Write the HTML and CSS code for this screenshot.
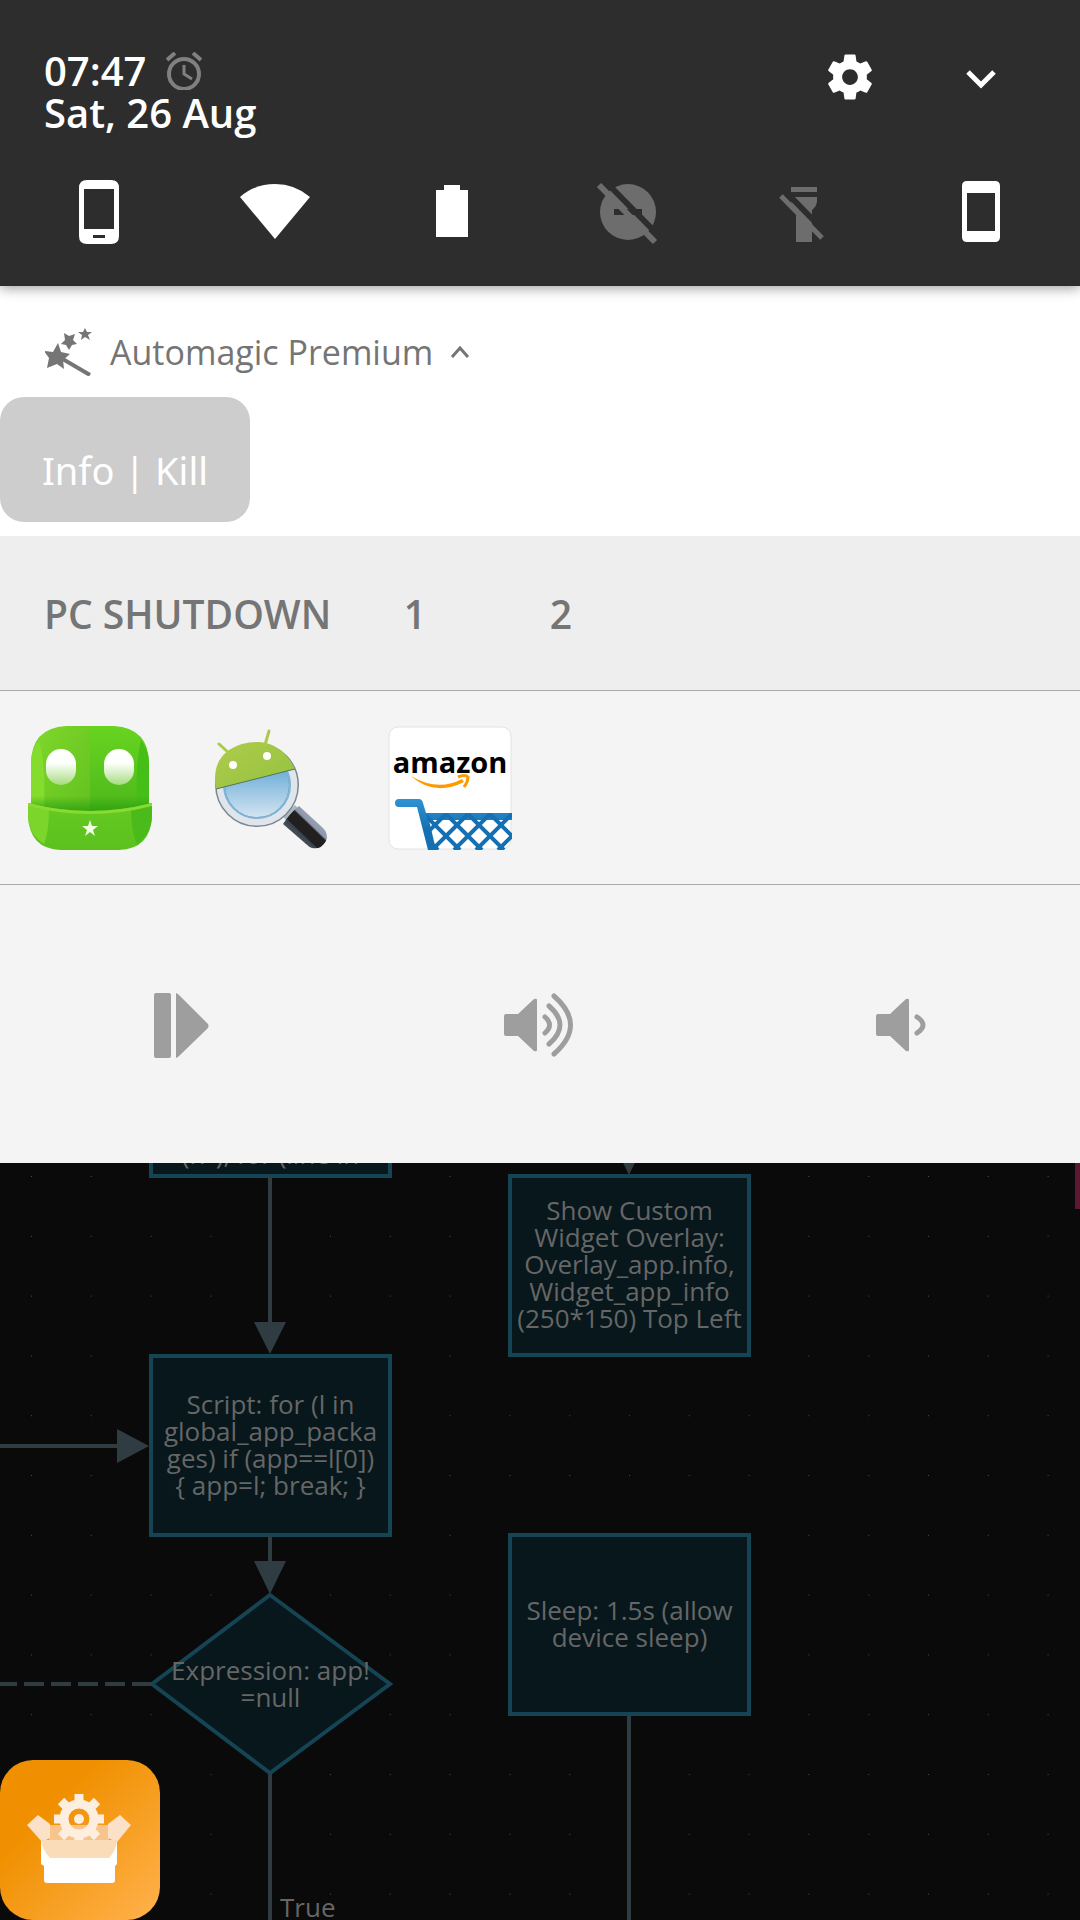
FILE: index.html
```
<!DOCTYPE html>
<html lang="en">
<head>
    <meta charset="UTF-8">
    <meta name="viewport" content="width=device-width,initial-scale=1">
    <title>Notification shade</title>
    <link rel="stylesheet" href="styles.css">
</head>
<body>
<header class="header">
    <div class="status">
        <div class="clock">
            <div class="time">07:47
                <svg class="alarm" viewBox="0 0 36 38" aria-hidden="true">
                    <circle cx="18" cy="22" r="15" fill="none" stroke="#808080" stroke-width="4"/>
                    <path d="M18 13v9l8 5" fill="none" stroke="#808080" stroke-width="3"/>
                    <path d="M1 8L9 1M27 1l8 7" stroke="#808080" stroke-width="4"/>
                </svg>
            </div>
            <div class="date">Sat, 26 Aug</div>
        </div>
        <button class="icon-btn" aria-label="Settings">
            <svg width="54" height="54" viewBox="0 0 24 24" fill="#fff"><path d="M19.43 12.98c.04-.32.07-.64.07-.98s-.03-.66-.07-.98l2.11-1.65c.19-.15.24-.42.12-.64l-2-3.46c-.12-.22-.39-.3-.61-.22l-2.49 1c-.52-.4-1.08-.73-1.69-.98l-.38-2.65C14.46 2.18 14.25 2 14 2h-4c-.25 0-.46.18-.49.42l-.38 2.65c-.61.25-1.17.59-1.69.98l-2.49-1c-.23-.09-.49 0-.61.22l-2 3.46c-.13.22-.07.49.12.64l2.11 1.65c-.04.32-.07.65-.07.98s.03.66.07.98l-2.11 1.65c-.19.15-.24.42-.12.64l2 3.46c.12.22.39.3.61.22l2.49-1c.52.4 1.08.73 1.69.98l.38 2.65c.03.24.24.42.49.42h4c.25 0 .46-.18.49-.42l.38-2.65c.61-.25 1.17-.59 1.69-.98l2.49 1c.23.09.49 0 .61-.22l2-3.46c.12-.22.07-.49-.12-.64l-2.11-1.65zM12 15.5c-1.93 0-3.5-1.57-3.5-3.5s1.57-3.5 3.5-3.5 3.5 1.57 3.5 3.5-1.57 3.5-3.5 3.5z"/></svg>
        </button>
        <button class="icon-btn" aria-label="Expand">
            <svg width="54" height="54" viewBox="0 0 54 54"><path d="M14 22l13 13 13-13" fill="none" stroke="#fff" stroke-width="5"/></svg>
        </button>
    </div>
    <div class="tiles">
        <button class="icon-btn" aria-label="Mobile data">
            <svg width="72" height="72" viewBox="0 0 72 72"><path fill="#fff" fill-rule="evenodd" d="M24 4h24q8 0 8 8v48q0 8-8 8H24q-8 0-8-8V12q0-8 8-8zM21 13v40h30V13zM30 59v3h12v-3z"/></svg>
        </button>
        <button class="icon-btn" aria-label="Wi-Fi">
            <svg width="72" height="72" viewBox="0 0 72 72"><path fill="#fff" d="M36 63L1 21Q16 8 36 8t35 13z"/></svg>
        </button>
        <button class="icon-btn" aria-label="Battery">
            <svg width="72" height="72" viewBox="0 0 72 72"><path fill="#fff" d="M20 14h8V9h16v5h8v47H20z"/></svg>
        </button>
        <button class="icon-btn" aria-label="Do not disturb">
            <svg width="72" height="72" viewBox="0 0 72 72">
                <circle cx="36" cy="36" r="28" fill="#6d6d6d"/>
                <path d="M22 33h28v6H22z" fill="#2d2d2d"/>
                <path d="M12 4l56 57" stroke="#2d2d2d" stroke-width="6"/>
                <path d="M7 9l56 57" stroke="#6d6d6d" stroke-width="6"/>
            </svg>
        </button>
        <button class="icon-btn" aria-label="Flashlight">
            <svg width="72" height="72" viewBox="0 0 72 72">
                <path d="M23 21h26v4q0 5-5 9v32H28V34q-5-5-5-9z" fill="#6d6d6d"/>
                <path d="M16 14l42 43M10 14l10 0 0 12z" stroke="#2d2d2d" stroke-width="6" fill="#2d2d2d"/>
                <path d="M23 11h26v5H23z" fill="#6d6d6d"/>
                <path d="M13 20l41 42" stroke="#6d6d6d" stroke-width="5"/>
            </svg>
        </button>
        <button class="icon-btn" aria-label="Rotation lock">
            <svg width="72" height="72" viewBox="0 0 72 72"><path fill="#fff" fill-rule="evenodd" d="M22 5h28q5 0 5 5v51q0 5-5 5H22q-5 0-5-5V10q0-5 5-5zM22 17v38h28V17z"/></svg>
        </button>
    </div>
</header>

<section class="notification">
    <div class="app-line">
        <svg class="wand" width="48" height="48" viewBox="0 0 48 48" fill="#757575" aria-hidden="true">
            <path d="M13 15l3 9 9 2-7 6 1 9-7-5-10 4 2-10-5-7 9 1z"/>
            <path d="M19 5l5 3 6-2-2 6 4 4-5 1-3 5-3-5-5-1 4-4z"/>
            <path d="M40 0l2 4h5l-4 3 2 5-5-3-4 3 1-5-4-3h5z"/>
            <path d="M16 30l29 17" stroke="#757575" stroke-width="4"/>
        </svg>
        <span class="app-name">Automagic Premium</span>
        <svg width="20" height="14" viewBox="0 0 20 14" aria-hidden="true"><path d="M2 12l8-9 8 9" fill="none" stroke="#757575" stroke-width="3"/></svg>
    </div>
    <button class="info-kill">Info | Kill</button>
</section>

<section class="actions">
    <button class="action action-first">PC SHUTDOWN</button>
    <button class="action">1</button>
    <button class="action">2</button>
</section>

<section class="apps">
    <button class="icon-btn" aria-label="Robot">
        <svg width="124" height="124" viewBox="0 0 124 124">
            <defs>
                <linearGradient id="hatL" x1="0" y1="0" x2="1" y2="1"><stop offset="0" stop-color="#7fd82b"/><stop offset="1" stop-color="#63c01f"/></linearGradient>
                <linearGradient id="hatR" x1="0" y1="0" x2="0" y2="1"><stop offset="0" stop-color="#68d420"/><stop offset="1" stop-color="#4cb61b"/></linearGradient>
                <linearGradient id="brim" x1="0" y1="0" x2="0" y2="1"><stop offset="0" stop-color="#66ca22"/><stop offset="1" stop-color="#5cc01f"/></linearGradient>
                <linearGradient id="eye" x1="0" y1="0" x2="0" y2="1"><stop offset="0" stop-color="#fff"/><stop offset=".4" stop-color="#fdfffb"/><stop offset="1" stop-color="#a5dc80"/></linearGradient>
                <linearGradient id="shade" x1="0" y1="0" x2="0" y2="1"><stop offset="0" stop-color="#2ba010" stop-opacity="0"/><stop offset="1" stop-color="#2ba010"/></linearGradient>
            </defs>
            <path d="M62 0H38Q3 2 3 38v52h59z" fill="url(#hatL)"/>
            <path d="M62 0h24q35 2 35 38v52H62z" fill="url(#hatR)"/>
            <path d="M11 14q-8 10-8 24v45h13Q18 40 11 14z" fill="#84dc2d"/>
            <path d="M113 14q8 10 8 24v45h-12Q107 40 113 14z" fill="#45bf18"/>
            <path d="M3 70h118v18H3z" fill="url(#shade)"/>
            <path d="M0 77q62 16 124 0v12q-1 34-33 35H33Q1 123 0 89z" fill="url(#brim)"/>
            <path d="M0 77l21 5q0 24-5 36Q0 108 0 89z" fill="#7bd52a"/>
            <path d="M124 77l-21 5q0 24 6 36 15-10 15-29z" fill="#4bbb1b"/>
            <path d="M0 77q62 16 124 0v3q-62 16-124 0z" fill="#8adb30"/>
            <rect x="18" y="23" width="30" height="36" rx="15" fill="url(#eye)"/>
            <rect x="76" y="23" width="30" height="36" rx="15" fill="url(#eye)"/>
            <path d="M62 94l2 6h6l-5 4 2 6-5-4-5 4 2-6-5-4h6z" fill="#f1ffe4"/>
        </svg>
    </button>
    <button class="icon-btn" aria-label="App search">
        <svg width="124" height="124" viewBox="0 0 124 124">
            <defs>
                <linearGradient id="lens" x1="0" y1="0" x2="0" y2="1"><stop offset=".3" stop-color="#6fafd9"/><stop offset="1" stop-color="#dde9f3"/></linearGradient>
                <linearGradient id="grip" x1="0" y1="1" x2="1" y2="0"><stop offset=".2" stop-color="#55616c"/><stop offset=".38" stop-color="#3a434c"/><stop offset=".4" stop-color="#221f20"/><stop offset=".57" stop-color="#221f20"/><stop offset=".6" stop-color="#8f97ab"/><stop offset=".8" stop-color="#9fa8bc"/></linearGradient>
                <linearGradient id="head" x1="0" y1="0" x2="1" y2="1"><stop offset="0" stop-color="#b0cb4c"/><stop offset="1" stop-color="#92c23e"/></linearGradient>
            </defs>
            <path d="M75 91l12-12 6 6-12 12z" fill="#a9babf"/>
            <path d="M91 80l24 22q6 6 3 13-5 9-14 7-3-1-6-4L75 98q7-11 16-18z" fill="url(#grip)"/>
            <circle cx="49" cy="59" r="37" fill="url(#lens)" stroke="#7b8791" stroke-width="10"/>
            <circle cx="49" cy="59" r="37" fill="none" stroke="#dfe5ea" stroke-width="7"/>
            <circle cx="49" cy="59" r="33" fill="none" stroke="#7db6dc" stroke-width="2"/>
            <path d="M8 63Q2 28 34 18q36-9 53 25z" fill="url(#head)"/>
            <path d="M8 63l79-20" stroke="#55735a" stroke-width="1"/>
            <path d="M11 18l11 10M61 5l-4 14" stroke="#aacb4a" stroke-width="3" stroke-linecap="round"/>
            <circle cx="25" cy="39" r="4" fill="#fff"/>
            <circle cx="59" cy="30" r="4" fill="#fff"/>
        </svg>
    </button>
    <button class="icon-btn" aria-label="Amazon Shopping">
        <svg width="124" height="124" viewBox="0 0 124 124">
            <defs>
                <clipPath id="basket"><path d="M38 87h86v30q0 7-7 7H46z"/></clipPath>
                <linearGradient id="cart" x1="0" y1="0" x2="0" y2="1"><stop offset="0" stop-color="#2f93d2"/><stop offset=".6" stop-color="#1470b2"/></linearGradient>
            </defs>
            <rect x="1" y="1" width="122" height="122" rx="9" fill="#fff" stroke="#e2e2e2"/>
            <text class="amazon" x="62" y="47" text-anchor="middle">amazon</text>
            <path d="M23 50q27 16 51 3l2 3q-30 15-53-6z" fill="#ff9900"/>
            <path d="M70 51q7-3 10 0 0 5-4 10" fill="none" stroke="#ff9900" stroke-width="3"/>
            <path d="M11 73h20q3 0 4 4l3 10h86v7H41l7 30h-8L29 81H11q-4 0-4-4t4-4z" fill="url(#cart)"/>
            <g clip-path="url(#basket)" stroke="#1470b2" stroke-width="4">
                <path d="M14 88l36 36M36 88l36 36M58 88l36 36M80 88l36 36M102 88l36 36"/>
                <path d="M58 88l-36 36M80 88l-36 36M102 88l-36 36M124 88l-36 36M146 88l-36 36"/>
            </g>
        </svg>
    </button>
</section>

<section class="media">
    <button class="icon-btn" aria-label="Play">
        <svg width="80" height="80" viewBox="0 0 80 80" fill="#9e9e9e"><rect x="14" y="9" width="17" height="65" rx="2"/><path d="M36 9l2 1 30 30q1 2 0 4L38 73l-2 1z"/></svg>
    </button>
    <button class="icon-btn" aria-label="Volume up">
        <svg width="80" height="80" viewBox="0 0 80 80">
            <path d="M6 30h12l16-15q3-1 3 1v50q0 2-3 1L18 52H6q-2 0-2-2V32q0-2 2-2z" fill="#9e9e9e"/>
            <path d="M45 33q9 8 0 16M49 22q22 19 0 38M54 12q33 29 0 58" fill="none" stroke="#9e9e9e" stroke-width="5" stroke-linecap="round"/>
        </svg>
    </button>
    <button class="icon-btn" aria-label="Volume down">
        <svg width="80" height="80" viewBox="0 0 80 80">
            <path d="M18 30h12l16-15q3-1 3 1v50q0 2-3 1L30 52H18q-2 0-2-2V32q0-2 2-2z" fill="#9e9e9e"/>
            <path d="M57 33q12 8 0 16" fill="none" stroke="#9e9e9e" stroke-width="5" stroke-linecap="round"/>
        </svg>
    </button>
</section>

<!-- flow editor behind the shade -->
<main class="canvas">
    <svg class="edges" aria-hidden="true">
        <defs>
            <pattern id="dots" x="31" y="13" width="59.8" height="59.8" patternUnits="userSpaceOnUse"><rect width="1" height="1" fill="#4c4c4c"/></pattern>
        </defs>
        <rect width="100%" height="100%" fill="url(#dots)"/>
        <path class="diamond" d="M270 432l120 89-120 89-118-89z"/>
    </svg>
    <div class="node node-loop">(n"), for (line in</div>
    <div class="node node-overlay">Show Custom<br>Widget Overlay:<br>Overlay_app.info,<br>Widget_app_info<br>(250*150) Top Left</div>
    <div class="node node-script">Script: for (l in<br>global_app_packa<br>ges) if (app==l[0])<br>{ app=l; break; }</div>
    <div class="node node-sleep">Sleep: 1.5s (allow<br>device sleep)</div>
    <div class="node node-expr">Expression: app!<br>=null</div>
    <svg class="edges" aria-hidden="true">
        <path class="wire" d="M270 13v150M0 283h120M270 372v30M270 610v400M629 552v400"/>
        <path class="wire" d="M152 521H0" stroke-dasharray="20 7"/>
        <path class="arrow" d="M254 159h32l-16 32zM254 398h32l-16 33zM117 266l32 17-32 17zM613-21h32l-16 33z"/>
    </svg>
    <span class="edge-label">True</span>
    <div class="marker"></div>
    <button class="floating" aria-label="Toolbox">
        <svg width="160" height="160" viewBox="0 0 160 160">
            <defs>
                <linearGradient id="orange" x1="0" y1="0" x2="1" y2="1"><stop offset=".3" stop-color="#f09000"/><stop offset="1" stop-color="#ffb24d"/></linearGradient>
            </defs>
            <rect width="160" height="160" rx="33" fill="url(#orange)"/>
            <path d="M49 65h60v22H49z" fill="#f7c48b"/>
            <g stroke="#fdeee0" stroke-width="9">
                <path d="M79 34v12M79 72v14M54 59h12M92 59h12M61 41l9 9M97 41l-9 9M61 77l9-9M97 77l-9-9"/>
            </g>
            <circle cx="79" cy="59" r="15" fill="none" stroke="#fdeee0" stroke-width="9"/>
            <circle cx="79" cy="59" r="5" fill="#fdeee0"/>
            <path d="M27 65l11-10 12 9v14l-8 4zM131 65l-11-10-12 9v14l9 4z" fill="#fbe1c8"/>
            <path d="M41 80h76v24l-2 2v14q0 3-3 3H47q-3 0-3-3v-14l-3-2z" fill="#fff"/>
            <path d="M41 80h76q0 9-8 18H50q-8-9-9-18z" fill="#fadcb8"/>
        </svg>
    </button>
</main>
</body>
</html>
```
FILE: styles.css
```
body, html {
    margin: 0;
    padding: 0;
}
body {
    display: flex;
    flex-direction: column;
    min-height: 100vh;
    background: #0a0a0a;
    font-family: "Open Sans", "Noto Sans", sans-serif;
}
button {
    border: 0;
    padding: 0;
    background: none;
    font-family: inherit;
    color: inherit;
}
svg {
    display: block;
}
.icon-btn {
    display: flex;
    align-items: center;
    justify-content: center;
}

/* header */
.header {
    position: relative;
    z-index: 1;
    padding: 50px 11px 38px;
    background: #2d2d2d;
    color: #fff;
    box-shadow: 0 2px 12px rgba(0, 0, 0, .4);
}
.status {
    display: grid;
    grid-template-columns: 1fr 86px 176px;
    align-items: start;
    height: 126px;
}
.clock {
    padding-left: 33px;
    font-size: 40px;
    font-weight: 600;
    line-height: 42px;
}
.time {
    display: flex;
    align-items: center;
    gap: 20px;
}
.alarm {
    width: 36px;
    height: 38px;
}
.tiles {
    display: grid;
    grid-template-columns: repeat(6, 1fr);
}

/* notification */
.notification {
    padding: 36px 0 14px;
    background: #fff;
}
.app-line {
    display: flex;
    align-items: center;
    gap: 17px;
    height: 60px;
    padding: 0 45px 15px;
    color: #757575;
    font-size: 34px;
}
.info-kill {
    display: block;
    width: 250px;
    height: 125px;
    padding-top: 20px;
    border-radius: 24px;
    background: #cdcdcd;
    color: #fff;
    font-family: "Noto Sans", sans-serif;
    font-size: 38px;
}
.actions {
    display: flex;
    padding: 0 22px;
    background: #eee;
    border-bottom: 1px solid #aaa;
}
.action {
    width: 146px;
    height: 154px;
    color: #757575;
    font-size: 39px;
    font-weight: 600;
}
.action-first {
    width: 320px;
    padding-left: 22px;
    text-align: left;
}
.apps {
    display: flex;
    gap: 56px;
    padding: 35px 28px 34px;
    background: #f4f4f4;
    border-bottom: 1px solid #aaa;
}
.amazon {
    font-family: "Open Sans", sans-serif;
    font-size: 29px;
    font-weight: 700;
}
.media {
    display: grid;
    grid-template-columns: repeat(3, 1fr);
    padding: 99px 0;
    background: #f4f4f4;
}

/* flow canvas */
.canvas {
    position: relative;
    flex: 1;
    min-height: 757px;
    overflow: hidden;
    color: #666;
    font-size: 26px;
    line-height: 27px;
}
.edges {
    position: absolute;
    inset: 0;
    width: 100%;
    height: 100%;
}
.node {
    position: absolute;
    box-sizing: border-box;
    display: flex;
    align-items: center;
    justify-content: center;
    width: 243px;
    height: 183px;
    padding-bottom: 2px;
    border: 4px solid #154455;
    background: #07171b;
    text-align: center;
    white-space: nowrap;
}
.node-loop {
    left: 149px;
    top: -168px;
    align-items: flex-end;
    padding-bottom: 6px;
}
.node-overlay {
    left: 508px;
    top: 11px;
}
.node-script {
    left: 149px;
    top: 191px;
}
.node-sleep {
    left: 508px;
    top: 370px;
}
.node-expr {
    left: 149px;
    top: 430px;
    border-color: transparent;
    background: none;
}
.diamond {
    fill: #07171b;
    stroke: #154455;
    stroke-width: 4;
}
.wire {
    fill: none;
    stroke: #2f3d43;
    stroke-width: 4;
}
.arrow {
    fill: #2f3d43;
}
.edge-label {
    position: absolute;
    left: 280px;
    top: 731px;
}
.marker {
    position: absolute;
    top: 0;
    right: 0;
    width: 5px;
    height: 46px;
    background: #5f1630;
}
.floating {
    position: absolute;
    left: 0;
    bottom: 0;
}
```
